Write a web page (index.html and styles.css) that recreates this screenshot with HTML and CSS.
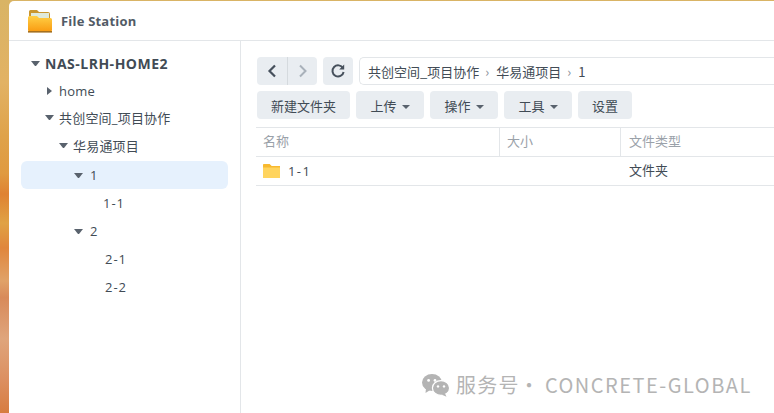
FILE: index.html
```html
<!DOCTYPE html>
<html lang="en">
<head>
  <meta charset="UTF-8">
  <title>File Station</title>
  <link rel="stylesheet" href="styles.css">
</head>
<body>

<div class="window">
  <div class="title-bar">
    <svg class="app-icon" width="26" height="26" viewBox="0 0 26 26">
      <defs>
        <linearGradient id="folderFront" x1="0" y1="0" x2="0" y2="1">
          <stop offset="0" stop-color="#ffcf45"/>
          <stop offset="1" stop-color="#f99a10"/>
        </linearGradient>
      </defs>
      <path d="M2 3.5 Q2 2 3.5 2 H10 L12 4 H21 Q23 4 23 6 V12 H2 Z" fill="#c9962f"/>
      <rect x="4" y="5" width="18" height="6" fill="#dfeadb"/>
      <path d="M1 9.5 Q1 8 2.5 8 H10 L12 10 H23.5 Q25 10 25 11.5 V22 Q25 24 23 24 H3 Q1 24 1 22 Z" fill="url(#folderFront)"/>
      <rect x="1" y="23" width="24" height="1.6" fill="#a5701f"/>
    </svg>
    <span class="app-name">File Station</span>
  </div>

  <div class="main">
    <div class="sidebar">
      <div class="tree-row root"><span class="arrow down"></span>NAS-LRH-HOME2</div>
      <div class="tree-row level-1"><span class="arrow right"></span>home</div>
      <div class="tree-row level-1 cjk"><span class="arrow down"></span>共创空间_项目协作</div>
      <div class="tree-row level-2 cjk"><span class="arrow down"></span>华易通项目</div>
      <div class="tree-row level-3 selected"><span class="arrow down"></span>1</div>
      <div class="tree-row leaf">1-1</div>
      <div class="tree-row level-3"><span class="arrow down"></span>2</div>
      <div class="tree-row leaf leaf-2">2-1</div>
      <div class="tree-row leaf leaf-2">2-2</div>
    </div>

    <div class="content">
      <div class="nav-row">
        <div class="nav-group">
          <button type="button" class="nav-btn">
            <svg width="12" height="16" viewBox="0 0 12 16"><path d="M9 2.5 L3.5 8 L9 13.5" fill="none" stroke="#46505c" stroke-width="2.2"/></svg>
          </button>
          <button type="button" class="nav-btn second">
            <svg width="12" height="16" viewBox="0 0 12 16"><path d="M3 2.5 L8.5 8 L3 13.5" fill="none" stroke="#a9b1ba" stroke-width="2"/></svg>
          </button>
        </div>
        <button type="button" class="nav-btn refresh">
          <svg width="16" height="16" viewBox="0 0 16 16"><path d="M13 5.2 A5.6 5.6 0 1 0 13.6 9" fill="none" stroke="#46505c" stroke-width="2"/><path d="M14.2 1.6 V6.6 H9.2 Z" fill="#46505c"/></svg>
        </button>
        <div class="path-bar">
          <span>共创空间_项目协作</span><span class="sep">›</span><span>华易通项目</span><span class="sep">›</span><span>1</span>
        </div>
      </div>

      <div class="toolbar">
        <button type="button" class="tool-btn wide">新建文件夹</button>
        <button type="button" class="tool-btn">上传<span class="caret"></span></button>
        <button type="button" class="tool-btn">操作<span class="caret"></span></button>
        <button type="button" class="tool-btn">工具<span class="caret"></span></button>
        <button type="button" class="tool-btn plain">设置</button>
      </div>

      <div class="grid-row grid-head">
        <div class="cell">名称</div>
        <div class="cell">大小</div>
        <div class="cell">文件类型</div>
      </div>
      <div class="grid-row file-row">
        <div class="cell name-cell">
          <svg width="17" height="14" viewBox="0 0 17 14"><path d="M0 1.2 Q0 0 1.2 0 H6.5 L8.5 2 H17 V14 H0 Z" fill="#ffd45e"/><path d="M0 1.2 Q0 0 1.2 0 H6.5 L8.5 2 H17 V3.4 H0 Z" fill="#f8b92f"/></svg>
          1-1
        </div>
        <div class="cell"></div>
        <div class="cell cjk">文件夹</div>
      </div>
    </div>
  </div>
</div>

<div class="watermark">
  <svg width="30" height="24" viewBox="0 0 30 24">
    <ellipse cx="11" cy="9.5" rx="10" ry="8.5" fill="#b4b4b4"/>
    <path d="M5 15 L4.5 20 L10 16.5 Z" fill="#b4b4b4"/>
    <ellipse cx="20" cy="15" rx="8.6" ry="7.4" fill="#b4b4b4" stroke="#fff" stroke-width="1.2"/>
    <path d="M24 20.5 L25.5 23.8 L20.5 21.5 Z" fill="#b4b4b4"/>
    <circle cx="7.6" cy="7.4" r="1.4" fill="#fff"/>
    <circle cx="14" cy="7.4" r="1.4" fill="#fff"/>
    <circle cx="17" cy="13.4" r="1.2" fill="#fff"/>
    <circle cx="23" cy="13.4" r="1.2" fill="#fff"/>
  </svg>
  <span class="mark-cn">服务号</span>
  <span class="mark-dot">·</span>
  <span class="mark-en">CONCRETE-GLOBAL</span>
</div>

</body>
</html>
```

FILE: styles.css
```css
* {
  margin: 0;
  padding: 0;
  box-sizing: border-box;
}

html, body {
  height: 100%;
  overflow: hidden;
}

body {
  position: relative;
  padding: 1px 0 0 9px;
  font-family: "Noto Sans CJK SC", "Liberation Sans", sans-serif;
  font-size: 13px;
  color: #414b55;
  background: linear-gradient(180deg, #d9b465 0%, #e2b264 20%, #dfa24a 33%, #e09a40 42%, #df8232 47%, #e0a244 54%, #e0863c 60%, #e0a268 68%, #d88a5a 72%, #dfa57c 82%, #dc8f60 92%, #d77c40 100%);
}

.window {
  height: 412px;
  display: flex;
  flex-direction: column;
  background: #fff;
  border-top-left-radius: 5px;
}

.title-bar {
  height: 40px;
  flex: none;
  display: flex;
  align-items: center;
  padding-left: 18px;
  border-bottom: 1px solid #e3e6e9;
}

.app-icon {
  margin-right: 8px;
}

.app-name {
  font-family: "Open Sans", sans-serif;
  font-size: 13px;
  font-weight: 700;
  color: #525b66;
  letter-spacing: 0.2px;
}

.main {
  flex: 1;
  display: flex;
}

.sidebar {
  width: 232px;
  flex: none;
  padding: 8px 12px 0;
  border-right: 1px solid #e3e6e9;
}

.tree-row {
  height: 28px;
  display: flex;
  align-items: center;
  font-family: "Open Sans", "Noto Sans CJK SC", sans-serif;
  font-size: 13px;
  letter-spacing: 0.2px;
  white-space: nowrap;
}

.cjk {
  padding-bottom: 3px;
}

.root {
  padding-left: 10px;
  font-weight: 700;
  font-size: 14px;
  letter-spacing: 0.5px;
  color: #414b55;
}

.level-1 {
  padding-left: 24px;
}

.level-2 {
  padding-left: 38px;
}

.level-3 {
  padding-left: 53px;
}

.level-3 .arrow {
  margin-right: 7px;
}

.leaf {
  padding-left: 82px;
  letter-spacing: 1px;
}

.leaf-2 {
  padding-left: 84px;
}

.selected {
  background: #e6f1fd;
  border-radius: 6px;
}

.arrow {
  flex: none;
  width: 0;
  height: 0;
  margin-right: 5px;
}

.arrow.down {
  width: 9px;
  border-left: 4.5px solid transparent;
  border-right: 4.5px solid transparent;
  border-top: 5px solid #59626d;
}

.arrow.right {
  margin: 0 7px 0 2px;
  border-top: 4.5px solid transparent;
  border-bottom: 4.5px solid transparent;
  border-left: 5px solid #59626d;
}

.content {
  flex: 1;
  min-width: 0;
  padding: 16px 0 0 16px;
}

.nav-row {
  height: 28px;
  display: flex;
  gap: 6px;
}

.nav-group {
  display: flex;
}

.nav-btn {
  width: 30px;
  height: 28px;
  display: flex;
  align-items: center;
  justify-content: center;
  border: none;
  border-radius: 4px;
  background: #e9edf1;
}

.nav-group .nav-btn {
  border-radius: 4px 0 0 4px;
}

.nav-group .second {
  border-left: 1px solid #d5dade;
  border-radius: 0 4px 4px 0;
}

.path-bar {
  flex: 1;
  display: flex;
  align-items: center;
  padding-left: 8px;
  border: 1px solid #e3e6e9;
  border-right: none;
  border-radius: 5px 0 0 5px;
  font-size: 13px;
}

.sep {
  margin: 0 7px 0 6px;
  color: #8a929b;
}

.toolbar {
  display: flex;
  gap: 6px;
  margin-top: 6px;
}

.tool-btn {
  height: 28px;
  width: 68px;
  border: none;
  border-radius: 4px;
  background: #e9edf1;
  color: #414b55;
  font-family: inherit;
  font-size: 13px;
}

.tool-btn.wide {
  width: 93px;
}

.tool-btn.plain {
  width: 54px;
}

.caret {
  display: inline-block;
  margin-left: 5px;
  vertical-align: middle;
  border-left: 4px solid transparent;
  border-right: 4px solid transparent;
  border-top: 4px solid #59626d;
}

.grid-row {
  display: grid;
  grid-template-columns: 243px 121px 1fr;
  height: 29px;
  margin-left: -1px;
  border-bottom: 1px solid #e3e6e9;
}

.grid-head {
  margin-top: 8px;
  height: 30px;
  border-top: 1px solid #e3e6e9;
  color: #9aa1a9;
}

.grid-head .cell {
  padding-bottom: 3px;
}

.grid-head .cell + .cell {
  border-left: 1px solid #e3e6e9;
}

.grid-head .cell:last-child {
  padding-left: 8px;
}

.cell {
  display: flex;
  align-items: center;
  padding-left: 7px;
}

.file-row .cell:last-child {
  padding-left: 9px;
}

.name-cell {
  gap: 8px;
  font-family: "Open Sans", sans-serif;
  letter-spacing: 1.4px;
}

.watermark {
  position: absolute;
  left: 421px;
  top: 370px;
  display: flex;
  align-items: center;
  font-family: "Noto Sans CJK SC", sans-serif;
  font-size: 20px;
  color: #b4b4b4;
  white-space: nowrap;
}

.mark-cn {
  margin-left: 5px;
  letter-spacing: 1.3px;
}

.mark-dot {
  margin: 0 6px 0 -1px;
}

.mark-en {
  letter-spacing: 1.5px;
}
```
